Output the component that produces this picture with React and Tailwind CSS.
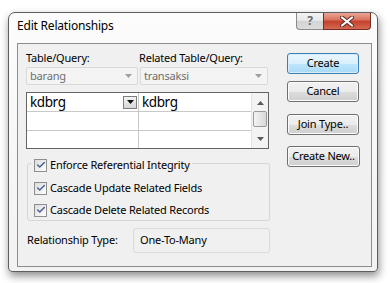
import { Check } from 'lucide-react'

function Btn({ children, primary, className = '' }) {
  return (
    <div
      className={
        'h-[21px] w-[72px] rounded-[3px] border flex items-center justify-center text-[11px] tracking-[-0.2px] text-black whitespace-nowrap ' +
        (primary
          ? 'border-[#3c7fb1] bg-[linear-gradient(#eaf6fd_0%,#d9f0fc_50%,#bee6fd_51%,#a7d9f5_100%)] shadow-[inset_0_0_0_1px_#d6eefb] '
          : 'border-[#707070] bg-[linear-gradient(#f2f2f2_0%,#ebebeb_50%,#dddddd_51%,#cfcfcf_100%)] shadow-[inset_0_0_0_1px_#fcfcfc] ') +
        className
      }
    >
      {children}
    </div>
  )
}

function Combo({ value, className = '' }) {
  return (
    <div className={'h-[18px] rounded-[2px] border border-[#d9d9d9] bg-[#f4f4f4] flex items-center ' + className}>
      <span className="pl-[3px] flex-1 text-[11px] tracking-[-0.2px] text-[#6d6d6d]">{value}</span>
      <svg width="7" height="4" viewBox="0 0 7 4" className="mr-[5px]">
        <path d="M0 0h7L3.5 4z" fill="#a0a0a0" />
      </svg>
    </div>
  )
}

function CheckRow({ label, className = '' }) {
  return (
    <div className={'h-[16px] flex items-center ' + className}>
      <div className="w-[13px] h-[13px] border border-[#8f8f8f] bg-[linear-gradient(135deg,#dcdcdc,#fefefe)] flex items-center justify-center">
        <Check size={10} strokeWidth={3.5} className="text-[#4a5f97]" />
      </div>
      <span className="ml-[3px] text-[11px] tracking-[-0.2px] text-black whitespace-nowrap">{label}</span>
    </div>
  )
}

export default function App() {
  return (
    <div
      className="w-[390px] h-[283px] bg-white pl-[8px] pt-[12px] overflow-hidden"
      style={{ fontFamily: '"Noto Sans", "Open Sans", sans-serif' }}
    >
      {/* Window */}
      <div className="w-[370px] h-[260px] border border-[#5e5e5e] rounded-t-[7px] rounded-b-[4px] bg-[linear-gradient(#fcfcfc,#f2f2f2)] shadow-[1px_4px_8px_rgba(0,0,0,0.45)] flex flex-col">
        {/* Title bar */}
        <div className="h-[30px] flex items-start">
          <span className="ml-[8px] mt-[5px] leading-[16px] text-[12px] tracking-[-0.2px] text-black">Edit Relationships</span>
          <div className="ml-auto mr-[6px] flex">
            <div className="w-[27px] h-[17px] border border-[#8a8a8a] border-t-0 border-r-0 rounded-bl-[4px] bg-[linear-gradient(#f4f4f4_0%,#e6e6e6_50%,#d3d3d3_51%,#dcdcdc_100%)] flex items-center justify-center">
              <span className="text-[12px] font-bold leading-none text-[#6a6a6a]">?</span>
            </div>
            <div className="w-[48px] h-[17px] border border-[#7a2a22] border-t-0 rounded-br-[4px] bg-[linear-gradient(#eaa595_0%,#d8705c_45%,#c43f2a_50%,#d46a52_100%)] flex items-center justify-center">
              <svg width="14" height="11" viewBox="0 0 14 11">
                <path d="M2 1.5L12 9.5M12 1.5L2 9.5" stroke="#5a2a22" strokeWidth="4" strokeLinecap="round" />
                <path d="M2 1.5L12 9.5M12 1.5L2 9.5" stroke="#ffffff" strokeWidth="2.2" strokeLinecap="round" />
              </svg>
            </div>
          </div>
        </div>

        {/* Client area */}
        <div className="flex-1 pl-[8px] pr-[5px] pb-[4px]">
          <div className="h-full border border-[#8d8d8d] bg-[#f0f0f0] flex">
            {/* Left column */}
            <div className="ml-[8px] pt-[6px] w-[244px]">
              <div className="h-[16px] flex text-[11px] tracking-[-0.2px] text-black leading-[16px]">
                <span className="w-[113px]">Table/Query:</span>
                <span>Related Table/Query:</span>
              </div>
              <div className="mt-[1px] flex">
                <Combo value="barang" className="w-[112px]" />
                <Combo value="transaksi" className="w-[128px] ml-[2px]" />
              </div>

              {/* Field grid */}
              <div className="mt-[7px] w-[243px] h-[57px] border border-[#646464] bg-white flex">
                <div className="flex-1 flex flex-col">
                  <div className="h-[19px] flex border-b border-[#c8c8c8]">
                    <div className="w-[112px] border-r border-[#c8c8c8] flex items-center pl-[3px]">
                      <span className="flex-1 text-[13.5px] tracking-[-0.4px] text-black leading-[18px]">kdbrg</span>
                      <div className="w-[14px] h-[13px] mr-[1px] border border-[#7d7d7d] bg-[linear-gradient(#f4f4f4,#d6d6d6)] flex items-center justify-center">
                        <svg width="7" height="4" viewBox="0 0 7 4">
                          <path d="M0 0h7L3.5 4z" fill="#111" />
                        </svg>
                      </div>
                    </div>
                    <div className="flex-1 flex items-center pl-[3px]">
                      <span className="text-[13.5px] tracking-[-0.4px] text-black leading-[18px]">kdbrg</span>
                    </div>
                  </div>
                  <div className="h-[19px] flex border-b border-[#c8c8c8]">
                    <div className="w-[112px] border-r border-[#c8c8c8]" />
                    <div className="flex-1" />
                  </div>
                  <div className="flex-1 flex">
                    <div className="w-[112px] border-r border-[#c8c8c8]" />
                    <div className="flex-1" />
                  </div>
                </div>
                {/* Scrollbar */}
                <div className="w-[17px] bg-[#f3f3f3] border-l border-[#e2e2e2] flex flex-col items-center">
                  <svg width="7" height="4" viewBox="0 0 7 4" className="mt-[8px]">
                    <path d="M3.5 0L7 4H0z" fill="#5a5a5a" />
                  </svg>
                  <div className="mt-[6px] w-[14px] h-[16px] rounded-[2px] border border-[#9a9a9a] bg-[linear-gradient(90deg,#f3f3f3,#d9d9d9)]" />
                  <svg width="7" height="4" viewBox="0 0 7 4" className="mt-auto mb-[7px]">
                    <path d="M0 0h7L3.5 4z" fill="#5a5a5a" />
                  </svg>
                </div>
              </div>

              {/* Options group */}
              <div className="mt-[14px] ml-[1px] w-[243px] h-[58px] border border-[#d5d5d5] rounded-[3px]">
                <div className="-mt-[7px] ml-[3px] w-fit pl-[3px] pr-[2px] bg-[#f0f0f0]">
                  <CheckRow label="Enforce Referential Integrity" />
                </div>
                <CheckRow label="Cascade Update Related Fields" className="mt-[7px] ml-[6px]" />
                <CheckRow label="Cascade Delete Related Records" className="mt-[6px] ml-[6px]" />
              </div>

              {/* Relationship type */}
              <div className="mt-[7px] ml-[1px] flex items-center">
                <span className="w-[106px] text-[11px] tracking-[-0.2px] text-black">Relationship Type:</span>
                <div className="w-[137px] h-[25px] border border-[#dadada] rounded-[3px] flex items-center pl-[6px]">
                  <span className="text-[11px] tracking-[-0.2px] text-black">One-To-Many</span>
                </div>
              </div>
            </div>

            {/* Right buttons */}
            <div className="ml-[17px] pt-[9px] flex flex-col">
              <Btn primary>Create</Btn>
              <Btn className="mt-[7px]">Cancel</Btn>
              <Btn className="mt-[12px]">Join Type..</Btn>
              <Btn className="mt-[11px] w-[73px]">Create New..</Btn>
            </div>
          </div>
        </div>
      </div>
    </div>
  )
}
